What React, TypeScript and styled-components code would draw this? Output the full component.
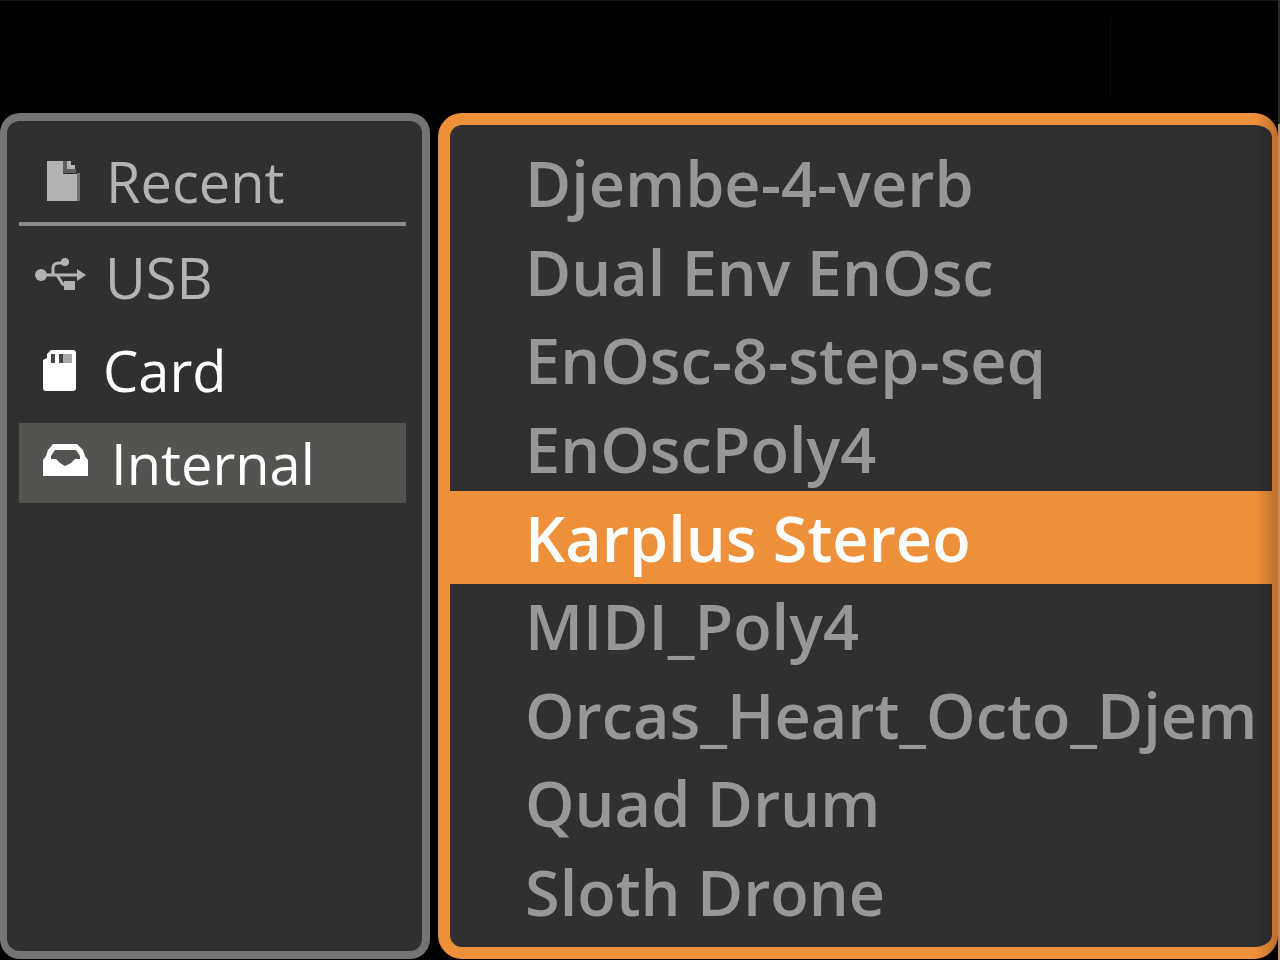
import React, { useState } from "react";
import styled, { createGlobalStyle } from "styled-components";

const GlobalStyle = createGlobalStyle`
  * {
    box-sizing: border-box;
  }
  body {
    margin: 0;
    background: #000;
    font-family: "Open Sans", "Noto Sans", sans-serif;
  }
`;

const Screen = styled.div`
  position: relative;
  display: flex;
  flex-direction: column;
  min-height: 100vh;
  padding: 0 2px 1px 0;
  overflow: hidden;
  background: #000;
`;

const Header = styled.header`
  display: flex;
  justify-content: flex-end;
  height: 113px;
  padding: 16px 167px 17px 0;
  border-top: 1px solid #161616;
`;

const HeaderRule = styled.div`
  width: 1px;
  background: #0c0c0c;
`;

const Browser = styled.main`
  display: flex;
  flex: 1;
  gap: 8px;
`;

const VolumePanel = styled.nav`
  display: flex;
  flex-direction: column;
  flex: 0 0 430px;
  gap: 13px;
  padding: 20px 16px 20px 12px;
  border: 8px solid #737572;
  border-left-width: 7px;
  border-radius: 20px;
  background: #303030;
`;

const VolumeButton = styled.button<{ $tone: string; $selected?: boolean }>`
  display: flex;
  align-items: center;
  gap: 18px;
  height: 80px;
  padding: 0 0 0 16px;
  border: 0;
  background: ${(p) => (p.$selected ? "#525450" : "transparent")};
  color: ${(p) => p.$tone};
  font: 400 56px/80px "Open Sans", "Noto Sans", sans-serif;
  white-space: nowrap;
  cursor: pointer;
`;

const RecentGroup = styled.div`
  display: flex;
  flex-direction: column;
  margin-bottom: -2px;
`;

const Divider = styled.hr`
  width: 100%;
  height: 4px;
  margin: 1px 0 0;
  border: 0;
  background: #8b8b8b;
`;

const Icon = styled.svg`
  flex: none;
  height: 48px;
`;

const PatchPanel = styled.section`
  display: flex;
  flex: 1;
  min-width: 0;
  border: 12px solid #ee8f3a;
  border-right-width: 6px;
  border-radius: 24px;
  background: #303030;
`;

const PatchList = styled.ul`
  display: flex;
  flex: 1;
  flex-direction: column;
  min-width: 0;
  margin: 0;
  padding: 14px 0 11px;
  list-style: none;
`;

const PatchItem = styled.li<{ $selected: boolean }>`
  display: flex;
  flex: 1;
  background: ${(p) => (p.$selected ? "#ee8f3a" : "transparent")};
  box-shadow: ${(p) =>
    p.$selected ? "0 2px #ee8f3a, 0 -2px #ee8f3a" : "none"};
`;

const PatchButton = styled.button<{ $selected: boolean }>`
  flex: 1;
  min-width: 0;
  padding: 0 0 0 75px;
  border: 0;
  background: transparent;
  color: ${(p) => (p.$selected ? "#fff" : "#989698")};
  font: 600 63px/88px "Open Sans", "Noto Sans", sans-serif;
  text-align: left;
  white-space: nowrap;
  cursor: pointer;
`;

const EdgeShade = styled.div`
  position: absolute;
  top: 113px;
  right: 0;
  bottom: 0;
  width: 24px;
  background: linear-gradient(to right, transparent, rgba(0, 0, 0, 0.2) 80%);
  pointer-events: none;
`;

const EdgeLight = styled.div`
  position: absolute;
  top: 0;
  right: 0;
  bottom: 0;
  width: 2px;
  background: linear-gradient(#2c2c2c 124px, #c58857 124px);
  pointer-events: none;
`;

const FileIcon = () => (
  <Icon width="53" viewBox="0 0 53 48" aria-hidden="true">
    <path d="M12 4H28V17H45V44H12Z" fill="currentColor" />
    <path d="M32 4H36V8H40V12H32Z" fill="currentColor" />
    <path d="M28 4H32V12H41V16H28Z" fill="#605e60" />
    <path d="M42 16V44H45V16Z" fill="#737173" />
  </Icon>
);

const UsbIcon = () => (
  <Icon width="52" viewBox="0 0 52 48" aria-hidden="true">
    <g fill="none" stroke="currentColor" strokeWidth="3">
      <path d="M4 22H46" />
      <path d="M18 22V15Q18 10 24 10H32" />
      <path d="M22 22L27 30Q28 32 31 32H36" />
    </g>
    <circle cx="6" cy="22" r="6" fill="currentColor" />
    <circle cx="30" cy="9" r="4" fill="currentColor" />
    <path d="M42 16L51 22L42 28Z" fill="currentColor" />
    <path d="M29 28H40V37H29Z" fill="currentColor" />
  </Icon>
);

const CardIcon = () => (
  <Icon width="50" viewBox="0 0 50 48" aria-hidden="true">
    <path
      d="M16 4H38Q41 4 41 7V42Q41 45 38 45H11Q8 45 8 42V14L12 12V8Z"
      fill="currentColor"
    />
    <path d="M16 8H20V17H16ZM24 8H28V17H24Z" fill="#454545" />
    <path d="M28 8H37V17H28Z" fill="#a8a8a8" />
  </Icon>
);

const DriveIcon = () => (
  <Icon width="58" viewBox="0 0 58 48" aria-hidden="true">
    <path
      fillRule="evenodd"
      fill="currentColor"
      d="M18 5H42L48 11L50 17L53 21V37H8V21L11 17L13 11ZM20 11L16 17V20H21L25 24L30 27L36 24L40 20H45V17L41 11Z"
    />
  </Icon>
);

const volumes = [
  { name: "USB", tone: "#b5b2b5", Glyph: UsbIcon },
  { name: "Card", tone: "#fff", Glyph: CardIcon },
  { name: "Internal", tone: "#fff", Glyph: DriveIcon },
];

const patches = [
  "Djembe-4-verb",
  "Dual Env EnOsc",
  "EnOsc-8-step-seq",
  "EnOscPoly4",
  "Karplus Stereo",
  "MIDI_Poly4",
  "Orcas_Heart_Octo_Djem",
  "Quad Drum",
  "Sloth Drone",
];

export default function App() {
  const [volume, setVolume] = useState("Internal");
  const [patch, setPatch] = useState("Karplus Stereo");

  return (
    <>
      <GlobalStyle />
      <Screen>
        <Header>
          <HeaderRule />
        </Header>
        <Browser>
          <VolumePanel aria-label="Volumes">
            <RecentGroup>
              <VolumeButton
                $tone="#b5b2b5"
                $selected={volume === "Recent"}
                onClick={() => setVolume("Recent")}
              >
                <FileIcon />
                Recent
              </VolumeButton>
              <Divider />
            </RecentGroup>
            {volumes.map(({ name, tone, Glyph }) => (
              <VolumeButton
                key={name}
                $tone={tone}
                $selected={volume === name}
                onClick={() => setVolume(name)}
              >
                <Glyph />
                {name}
              </VolumeButton>
            ))}
          </VolumePanel>
          <PatchPanel aria-label="Patches">
            <PatchList>
              {patches.map((name) => (
                <PatchItem key={name} $selected={patch === name}>
                  <PatchButton
                    $selected={patch === name}
                    onClick={() => setPatch(name)}
                  >
                    {name}
                  </PatchButton>
                </PatchItem>
              ))}
            </PatchList>
          </PatchPanel>
        </Browser>
        <EdgeShade />
        <EdgeLight />
      </Screen>
    </>
  );
}
